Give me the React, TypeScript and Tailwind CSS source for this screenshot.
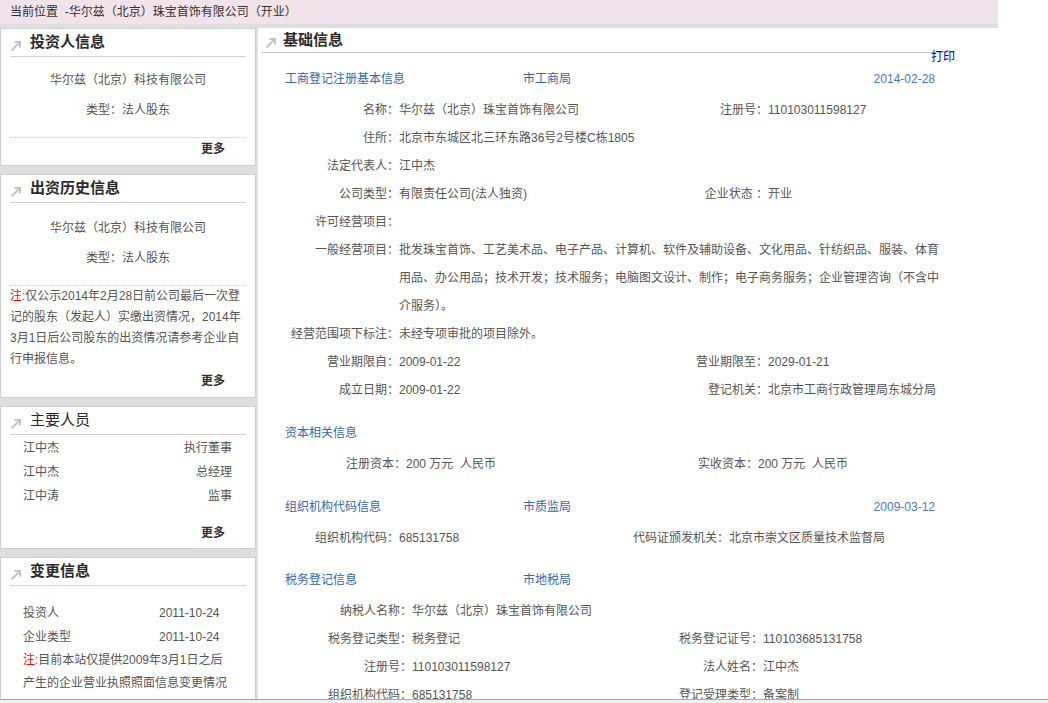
import type { ReactNode } from 'react';

/** Small grey "↗" marker used in front of every panel title. */
function ArrowIcon() {
  return (
    <svg width="12" height="12" viewBox="0 0 12 12" className="shrink-0">
      <path d="M1.5 10.5 L10 2" stroke="#c4c4c4" strokeWidth="2" fill="none" />
      <path d="M4.5 2 H10 V7.5" stroke="#c4c4c4" strokeWidth="2" fill="none" />
    </svg>
  );
}

type BoxProps = {
  title: string;
  bold?: boolean;
  children: ReactNode;
};

function SideBox({ title, bold = true, children }: BoxProps) {
  return (
    <div className="bg-white border border-[#cfcfcf]">
      <div className="mx-[9px] h-[28px] border-b border-[#d2d2d2] flex items-center">
        <span className="w-[20px] pt-[6px]">
          <ArrowIcon />
        </span>
        <span className={`text-[15px] text-[#2b2b2b] ${bold ? 'font-bold' : 'font-normal'}`}>{title}</span>
      </div>
      {children}
    </div>
  );
}

function More({ className = '' }: { className?: string }) {
  return (
    <div className={`h-[22px] leading-[22px] text-right pr-[30px] text-[12px] font-bold text-[#333] mb-[5px] ${className}`}>
      更多
    </div>
  );
}

function Red({ children }: { children: ReactNode }) {
  return <span className="text-[#ff0000]">{children}</span>;
}

function SectionHead({ title, agency, date }: { title: string; agency?: string; date?: string }) {
  return (
    <div className="flex h-[34px] items-center w-[650px] text-[#3366b3]">
      <span className="w-[238px]">{title}</span>
      <span className="flex-1">{agency}</span>
      <span className="text-[#4a78c2]">{date}</span>
    </div>
  );
}

const L = 'text-right whitespace-nowrap';
const V = 'whitespace-nowrap';

export default function App() {
  return (
    <div className="min-h-screen bg-white font-['Liberation_Sans','Noto_Sans_CJK_SC',sans-serif] text-[12px] text-[#555]">
      <div className="w-[998px] bg-[#dedede]">
        {/* ── breadcrumb ── */}
        <div className="h-[24px] bg-[#f0e4ea] leading-[25px] pl-[10px] text-[#333] whitespace-nowrap">
          当前位置&nbsp; -华尔兹（北京）珠宝首饰有限公司（开业）
        </div>

        <div className="flex pt-[4px]">
          {/* ── Left column ── */}
          <div className="w-[256px] shrink-0 flex flex-col gap-[8px]">
            <SideBox title="投资人信息">
              <div className="mt-[8px] text-center leading-[30px]">
                <div>华尔兹（北京）科技有限公司</div>
                <div>类型：法人股东</div>
              </div>
              <div className="mx-[9px] mt-[12px] border-t border-dotted border-[#cccccc]" />
              <More />
            </SideBox>

            <SideBox title="出资历史信息">
              <div className="mt-[10px] text-center leading-[30px]">
                <div>华尔兹（北京）科技有限公司</div>
                <div>类型：法人股东</div>
              </div>
              <div className="mx-[9px] mt-[12px] border-t border-dotted border-[#cccccc]" />
              <div className="px-[9px] leading-[21px] whitespace-nowrap">
                <div>
                  <Red>注:</Red>仅公示2014年2月28日前公司最后一次登
                </div>
                <div>记的股东（发起人）实缴出资情况，2014年</div>
                <div>3月1日后公司股东的出资情况请参考企业自</div>
                <div>行申报信息。</div>
              </div>
              <More />
            </SideBox>

            <SideBox title="主要人员" bold={false}>
              <div className="mt-[1px] pl-[22px] pr-[23px]">
                {[
                  ['江中杰', '执行董事'],
                  ['江中杰', '总经理'],
                  ['江中涛', '监事'],
                ].map(([n, r], i) => (
                  <div key={i} className="flex justify-between h-[24px] leading-[24px]">
                    <span>{n}</span>
                    <span>{r}</span>
                  </div>
                ))}
              </div>
              <More className="mt-[14px] !mb-[4px]" />
            </SideBox>

            <SideBox title="变更信息">
              <div className="mt-[15px] pl-[22px] pb-[12px]">
                <div className="grid grid-cols-[136px_auto] leading-[24px]">
                  <span>投资人</span>
                  <span>2011-10-24</span>
                  <span>企业类型</span>
                  <span>2011-10-24</span>
                </div>
                <div className="leading-[23px] whitespace-nowrap">
                  <div>
                    <Red>注:</Red>目前本站仅提供2009年3月1日之后
                  </div>
                  <div>产生的企业营业执照照面信息变更情况</div>
                </div>
              </div>
            </SideBox>
          </div>

          {/* ── Main panel ── */}
          <div className="ml-[2px] flex-1 bg-white min-h-[700px]">
            <div className="relative ml-[4px] w-[693px] h-[25px] border-b border-[#c4c4c4] flex items-center pl-[3px]">
              <span className="w-[18px] pt-[6px]">
                <ArrowIcon />
              </span>
              <span className="text-[15px] font-bold text-[#2b2b2b]">基础信息</span>
              <span className="absolute right-0 top-[22px] leading-[14px] text-[#0000ff]">打印</span>
            </div>

            <div className="pl-[27px] mt-[9px]">
              {/* 工商登记 */}
              <SectionHead title="工商登记注册基本信息" agency="市工商局" date="2014-02-28" />
              <div className="grid grid-cols-[114px_221px_148px_173px] leading-[28px]">
                <span className={L}>名称：</span>
                <span className={V}>华尔兹（北京）珠宝首饰有限公司</span>
                <span className={L}>注册号：</span>
                <span className={V}>110103011598127</span>

                <span className={L}>住所：</span>
                <span className={`${V} col-span-3`}>北京市东城区北三环东路36号2号楼C栋1805</span>

                <span className={L}>法定代表人：</span>
                <span className={`${V} col-span-3`}>江中杰</span>

                <span className={L}>公司类型：</span>
                <span className={V}>有限责任公司(法人独资)</span>
                <span className={L}>企业状态 ：</span>
                <span className={V}>开业</span>

                <span className={L}>许可经营项目：</span>
                <span className="col-span-3" />

                <span className={L}>一般经营项目：</span>
                <span className="col-span-3">
                  批发珠宝首饰、工艺美术品、电子产品、计算机、软件及辅助设备、文化用品、针纺织品、服装、体育用品、办公用品；技术开发；技术服务；电脑图文设计、制作；电子商务服务；企业管理咨询（不含中介服务）。
                </span>

                <span className={L}>经营范围项下标注：</span>
                <span className={`${V} col-span-3`}>未经专项审批的项目除外。</span>

                <span className={L}>营业期限自：</span>
                <span className={V}>2009-01-22</span>
                <span className={L}>营业期限至：</span>
                <span className={V}>2029-01-21</span>

                <span className={L}>成立日期：</span>
                <span className={V}>2009-01-22</span>
                <span className={L}>登记机关：</span>
                <span className={V}>北京市工商行政管理局东城分局</span>
              </div>

              {/* 资本 */}
              <div className="mt-[12px]">
                <SectionHead title="资本相关信息" />
                <div className="grid grid-cols-[121px_232px_120px_180px] leading-[28px]">
                  <span className={L}>注册资本：</span>
                  <span className={V}>200 万元&nbsp; 人民币</span>
                  <span className={L}>实收资本：</span>
                  <span className={V}>200 万元&nbsp; 人民币</span>
                </div>
              </div>

              {/* 组织机构代码 */}
              <div className="mt-[12px]">
                <SectionHead title="组织机构代码信息" agency="市质监局" date="2009-03-12" />
                <div className="grid grid-cols-[114px_210px_120px_210px] leading-[28px]">
                  <span className={L}>组织机构代码：</span>
                  <span className={V}>685131758</span>
                  <span className={L}>代码证颁发机关：</span>
                  <span className={V}>北京市崇文区质量技术监督局</span>
                </div>
              </div>

              {/* 税务登记 */}
              <div className="mt-[11px]">
                <SectionHead title="税务登记信息" agency="市地税局" />
                <div className="grid grid-cols-[127px_231px_120px_180px] leading-[28px]">
                  <span className={L}>纳税人名称：</span>
                  <span className={`${V} col-span-3`}>华尔兹（北京）珠宝首饰有限公司</span>

                  <span className={L}>税务登记类型：</span>
                  <span className={V}>税务登记</span>
                  <span className={L}>税务登记证号：</span>
                  <span className={V}>110103685131758</span>

                  <span className={L}>注册号：</span>
                  <span className={V}>110103011598127</span>
                  <span className={L}>法人姓名：</span>
                  <span className={V}>江中杰</span>

                  <span className={L}>组织机构代码：</span>
                  <span className={V}>685131758</span>
                  <span className={L}>登记受理类型：</span>
                  <span className={V}>备案制</span>
                </div>
              </div>
            </div>
          </div>
        </div>
      </div>

      {/* window's horizontal scrollbar edge */}
      <div className="fixed left-0 right-0 bottom-0 h-[4px] bg-[#eef0f2] border-t border-[#a8a8a8]" />
    </div>
  );
}
